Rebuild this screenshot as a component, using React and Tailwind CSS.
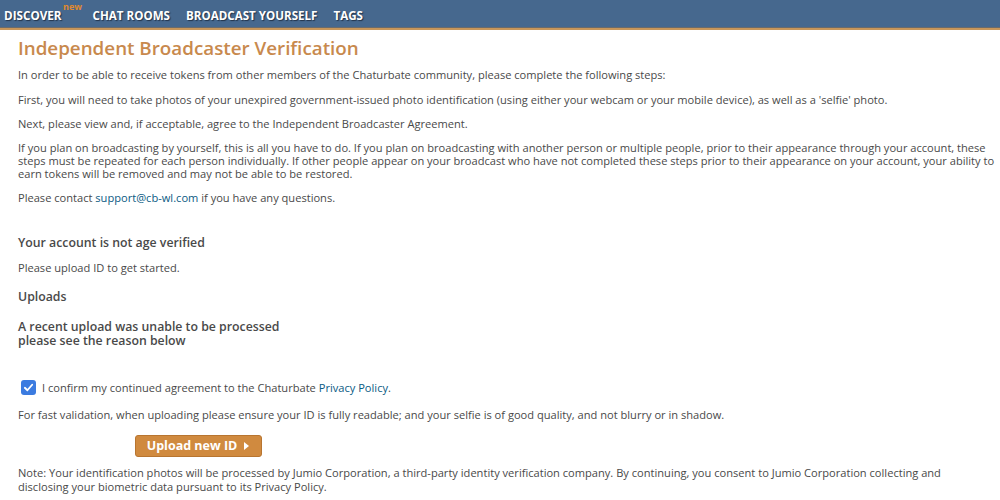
import React from "react";

const font = { fontFamily: '"Open Sans", "Noto Sans", sans-serif' };

export default function App() {
  return (
    <div className="w-[1000px] h-[500px] bg-white overflow-hidden text-[#494949]" style={font}>
      <div className="h-[27px] bg-[#46688e] flex items-end pl-[4px] pb-[5px]">
        <div className="relative text-white font-bold text-[11.7px] leading-none [text-shadow:1px_1px_1px_#22334a]">
          DISCOVER
          <span className="absolute left-[59px] top-[-8px] text-[9px] font-bold text-[#e08a2e] [text-shadow:none]">new</span>
        </div>
        <div className="ml-[31px] text-white font-bold text-[11.6px] leading-none [text-shadow:1px_1px_1px_#22334a]">CHAT ROOMS</div>
        <div className="ml-[16px] text-white font-bold text-[11.6px] leading-none [text-shadow:1px_1px_1px_#22334a]">BROADCAST YOURSELF</div>
        <div className="ml-[16px] text-white font-bold text-[11.6px] leading-none [text-shadow:1px_1px_1px_#22334a]">TAGS</div>
      </div>
      <div className="h-[1px] bg-[#6b6b6b]"></div>
      <div className="h-[2px] bg-[#c8965a]"></div>
      <div className="pl-[18px] pt-[7px]">
        <h1 className="text-[18.8px] font-semibold text-[#c8894d] leading-[22px]">Independent Broadcaster Verification</h1>
        <div className="mt-[9px] text-[11.1px] leading-[13px] flex flex-col gap-[11px]">
          <p className="mb-[1px]">In order to be able to receive tokens from other members of the Chaturbate community, please complete the following steps:</p>
          <p>First, you will need to take photos of your unexpired government-issued photo identification (using either your webcam or your mobile device), as well as a 'selfie' photo.</p>
          <p>Next, please view and, if acceptable, agree to the Independent Broadcaster Agreement.</p>
          <p>If you plan on broadcasting by yourself, this is all you have to do. If you plan on broadcasting with another person or multiple people, prior to their appearance through your account, these steps must be repeated for each person individually. If other people appear on your broadcast who have not completed these steps prior to their appearance on your account, your ability to earn tokens will be removed and may not be able to be restored.</p>
          <p>Please contact <span className="text-[#0a5a83]">support@cb-wl.com</span> if you have any questions.</p>
        </div>
        <div className="mt-[32px] text-[12.3px] font-semibold leading-[14px]">Your account is not age verified</div>
        <div className="mt-[11px] text-[11.1px] leading-[13px]">Please upload ID to get started.</div>
        <div className="mt-[16px] text-[12.3px] font-semibold leading-[14px]">Uploads</div>
        <div className="mt-[16px] text-[12.3px] font-semibold leading-[14px]">
          <div>A recent upload was unable to be processed</div>
          <div>please see the reason below</div>
        </div>
        <div className="mt-[32px] flex items-center gap-[6px] pl-[3px]">
          <div className="w-[15px] h-[15px] rounded-[3px] bg-[#3b7be0] flex items-center justify-center">
            <svg width="11" height="11" viewBox="0 0 12 12"><path d="M2 6.3 L4.8 9 L10 3" stroke="white" strokeWidth="2" fill="none" strokeLinecap="round" strokeLinejoin="round" /></svg>
          </div>
          <span className="text-[11.1px] leading-[13px]">I confirm my continued agreement to the Chaturbate <span className="text-[#0a5a83]">Privacy Policy</span>.</span>
        </div>
        <p className="mt-[13px] text-[11.1px] leading-[13px]">For fast validation, when uploading please ensure your ID is fully readable; and your selfie is of good quality, and not blurry or in shadow.</p>
        <div className="mt-[14px] pl-[117px]">
          <div className="w-[127px] h-[22px] rounded-[3px] bg-[#d08a3f] border border-[#b87530] flex items-center justify-center gap-[7px] text-white font-bold text-[12.5px]">
            Upload new ID
            <svg width="6" height="8" viewBox="0 0 6 8"><path d="M0 0 L5 4 L0 8 Z" fill="white" /></svg>
          </div>
        </div>
        <p className="mt-[9px] max-w-[960px] text-[11.1px] leading-[14px]">Note: Your identification photos will be processed by Jumio Corporation, a third-party identity verification company. By continuing, you consent to Jumio Corporation collecting and disclosing your biometric data pursuant to its Privacy Policy.</p>
      </div>
    </div>
  );
}
